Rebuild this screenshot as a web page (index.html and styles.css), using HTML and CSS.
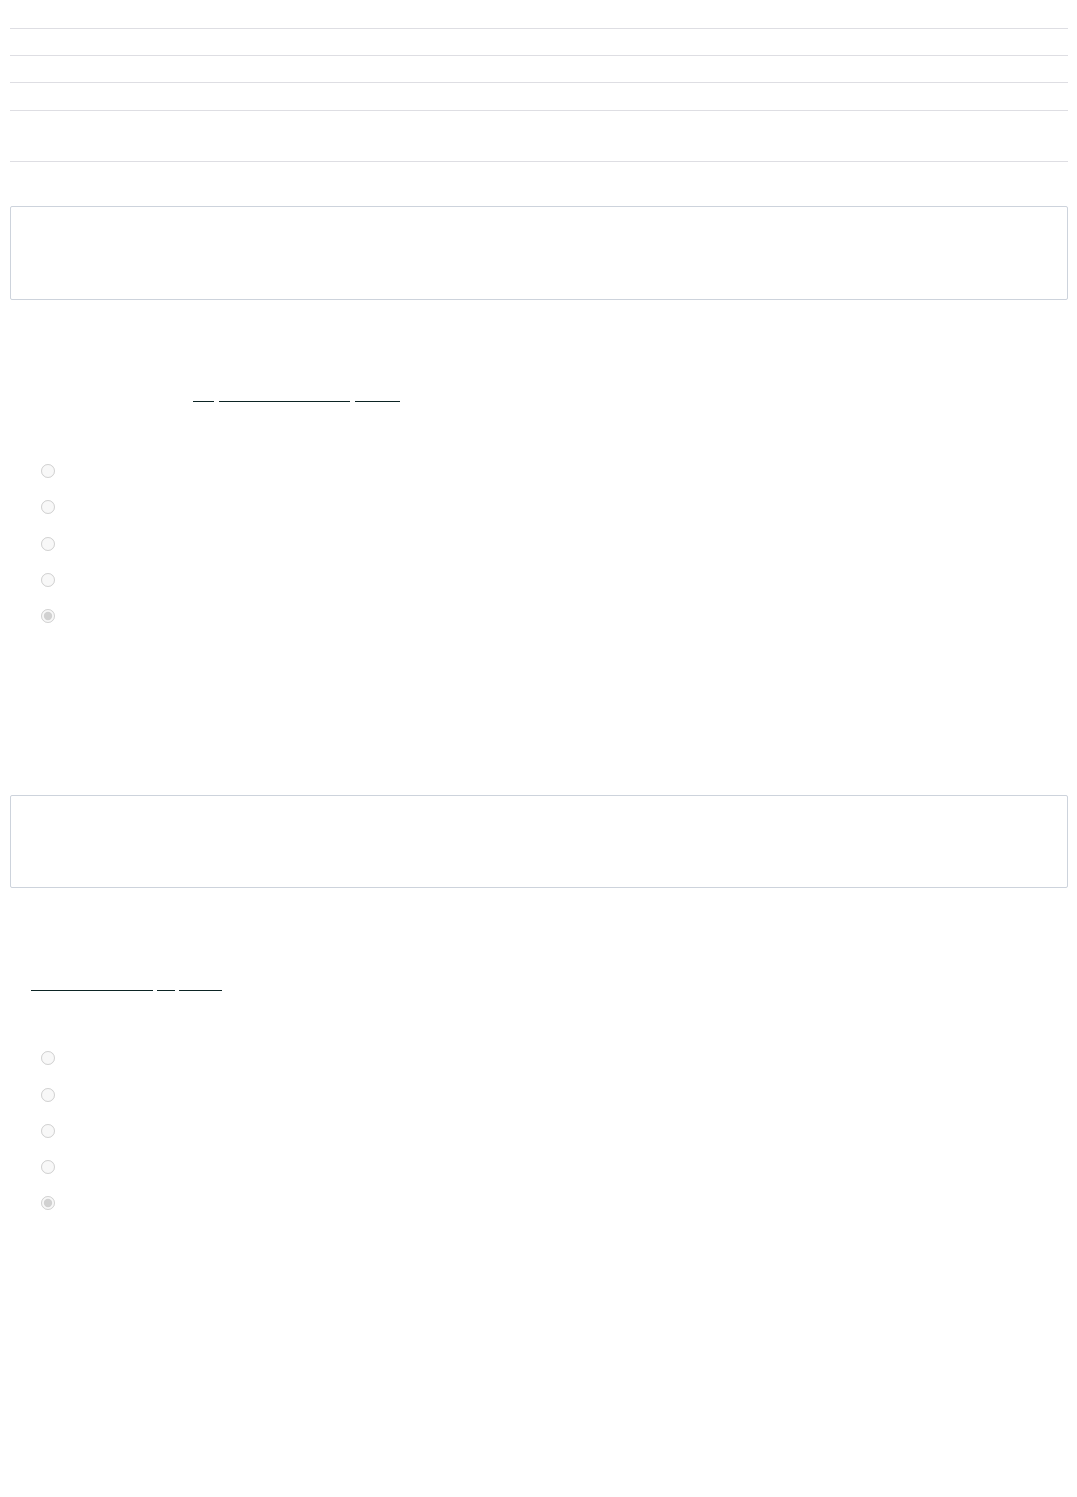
FILE: index.html
```html
<!DOCTYPE html>
<html lang="en">
<head>
<meta charset="utf-8">
<title>Quiz</title>
<link rel="stylesheet" href="styles.css">
</head>
<body>
<div class="page">
  <div class="rows">
    <div class="row r1"></div>
    <div class="row r2"></div>
    <div class="row r3"></div>
    <div class="row r4"></div>
    <div class="row r5"></div>
  </div>

  <section class="question first">
    <div class="box"></div>
    <div class="prompt p1">
      <span class="blank w21"></span>
      <span class="blank w131"></span>
      <span class="blank w45"></span>
    </div>
    <div class="options">
      <label class="option"><input type="radio" name="q1" disabled aria-label="option a"></label>
      <label class="option"><input type="radio" name="q1" disabled aria-label="option b"></label>
      <label class="option"><input type="radio" name="q1" disabled aria-label="option c"></label>
      <label class="option"><input type="radio" name="q1" disabled aria-label="option d"></label>
      <label class="option"><input type="radio" name="q1" disabled checked aria-label="option e"></label>
    </div>
  </section>

  <section class="question second">
    <div class="box b2"></div>
    <div class="prompt p2">
      <span class="blank w122"></span>
      <span class="blank w18"></span>
      <span class="blank w43"></span>
    </div>
    <div class="options o2">
      <label class="option"><input type="radio" name="q2" disabled aria-label="option a"></label>
      <label class="option"><input type="radio" name="q2" disabled aria-label="option b"></label>
      <label class="option"><input type="radio" name="q2" disabled aria-label="option c"></label>
      <label class="option"><input type="radio" name="q2" disabled aria-label="option d"></label>
      <label class="option"><input type="radio" name="q2" disabled checked aria-label="option e"></label>
    </div>
  </section>
</div>
</body>
</html>
```
FILE: styles.css
```css
html, body {
  margin: 0;
  padding: 0;
  background: #ffffff;
  font-family: "Liberation Sans", Arial, sans-serif;
  color: #ffffff;
}

.page {
  padding: 0 9px 0 10px;
}

.rows {
  display: flex;
  flex-direction: column;
}

.row {
  border-bottom: 1px solid #dedee3;
}
.r1 { height: 28px; }
.r2 { height: 26px; }
.r3 { height: 26px; }
.r4 { height: 27px; }
.r5 { height: 50px; }

.question.first {
  margin-top: 44px;
}
.question.second {
  margin-top: 161px;
}

.box {
  height: 92px;
  border: 1px solid #cdd3dc;
  border-radius: 2px;
}
.box.b2 {
  height: 91px;
}

.prompt {
  margin-top: 88px;
  display: flex;
  height: 14px;
}
.p1 {
  padding-left: 183px;
  gap: 5px;
}
.p2 {
  padding-left: 21px;
  gap: 4px;
  margin-top: 89px;
}

.blank {
  display: block;
  height: 13px;
  border-bottom: 1px solid #0c2424;
}
.w21 { width: 21px; }
.w131 { width: 131px; }
.w45 { width: 45px; }
.w122 { width: 122px; }
.w18 { width: 18px; }
.w43 { width: 43px; }

.options {
  margin-top: 51px;
  display: flex;
  flex-direction: column;
}
.options.o2 {
  margin-top: 49px;
}

.option {
  height: 36.25px;
  display: flex;
  align-items: center;
  padding-left: 31px;
}

.option input {
  margin: 0;
  width: 14px;
  height: 14px;
}
```
